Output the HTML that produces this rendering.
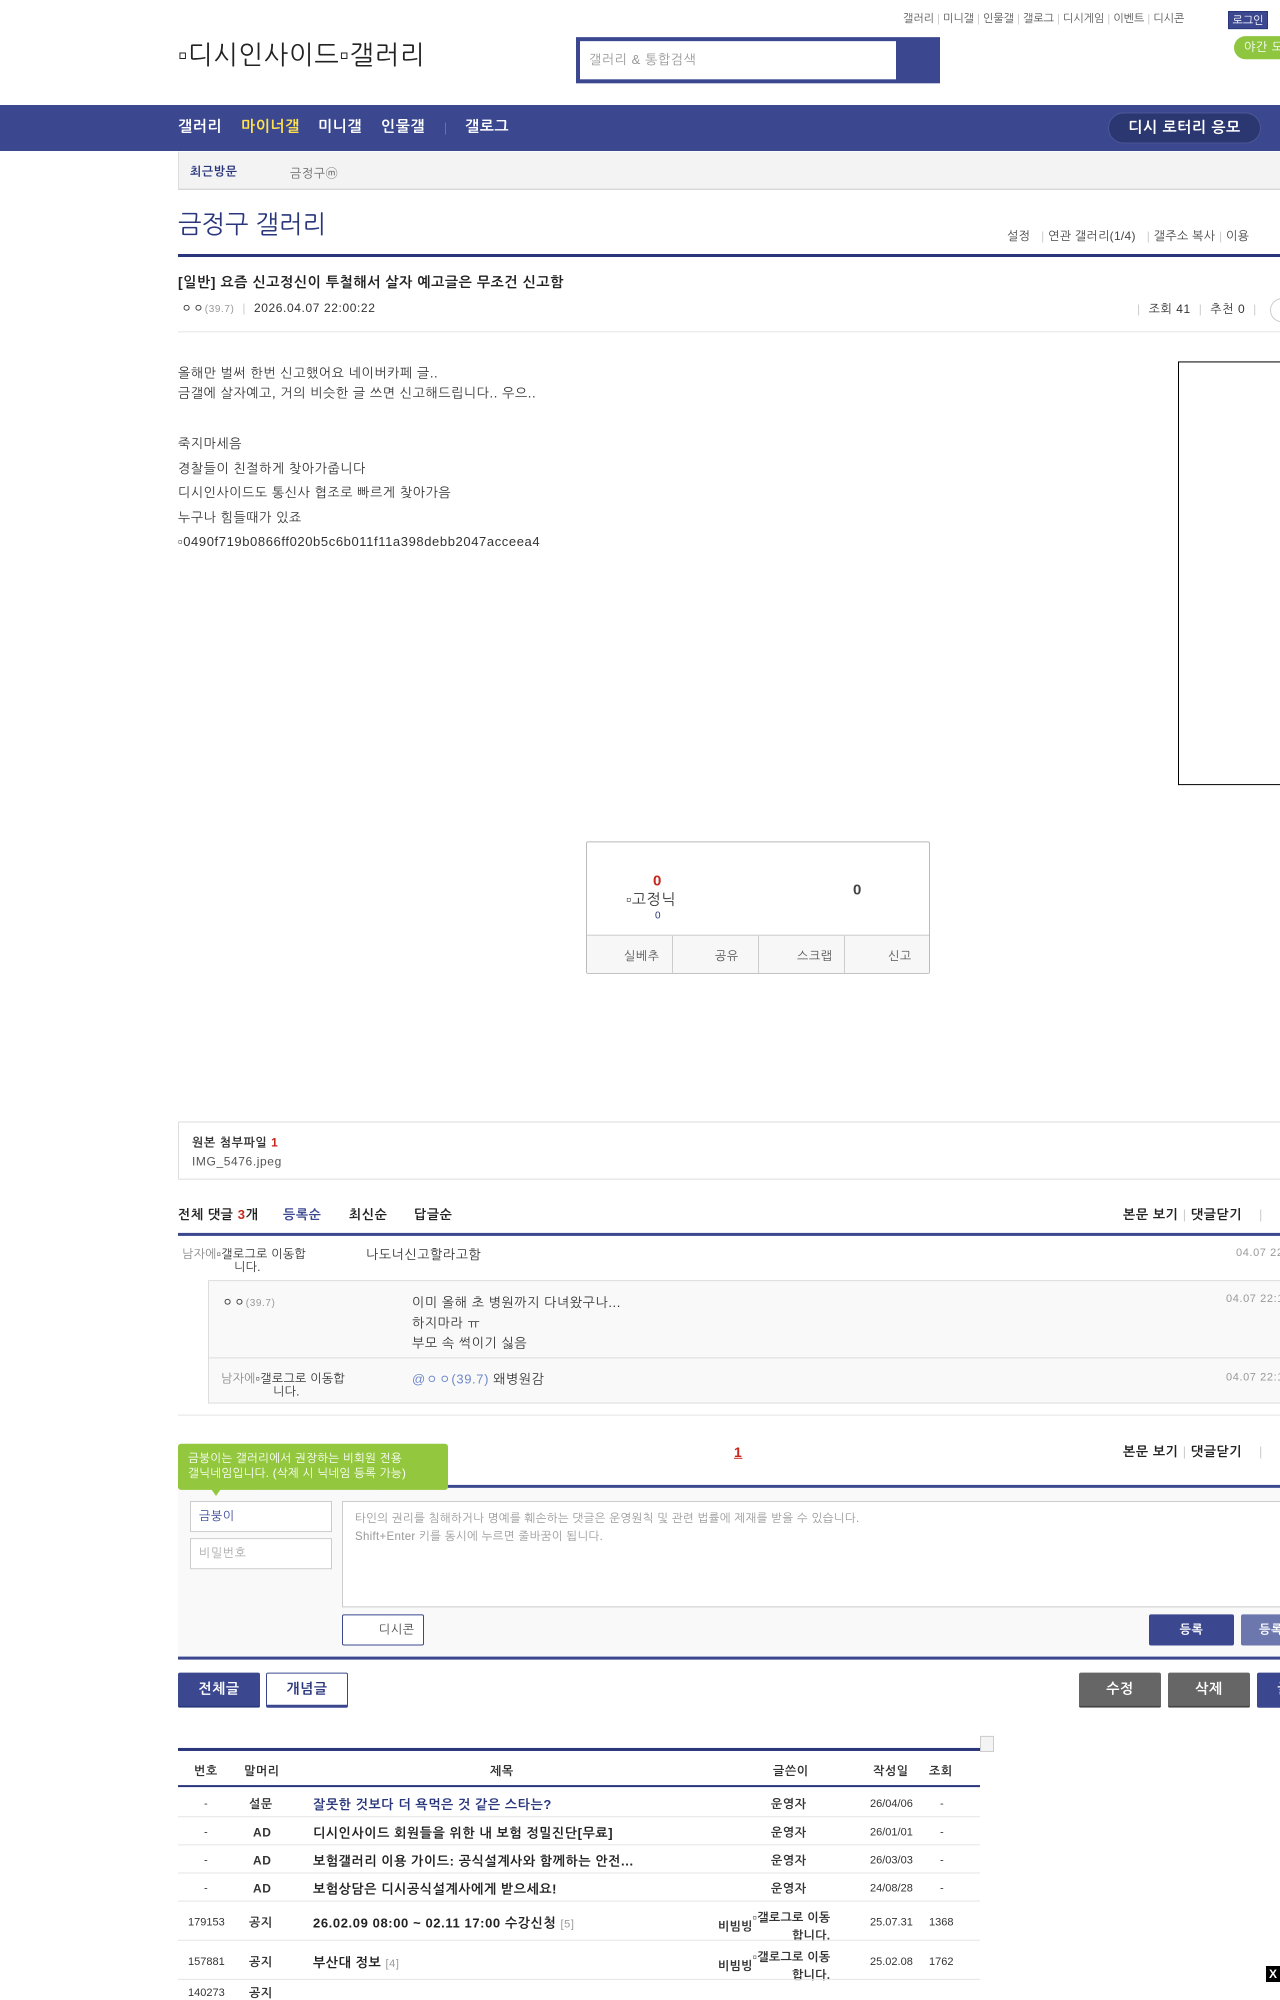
<!DOCTYPE html>
<html><head><meta charset="utf-8"><style>
*{margin:0;padding:0;box-sizing:border-box}
body{width:1280px;height:1982px;overflow:hidden;position:relative;background:#fff;font-family:"Liberation Sans","NanumGothic","Noto Sans CJK KR",sans-serif;color:#333;font-size:13px;letter-spacing:0.6px}
#w{position:absolute;left:0;top:0;width:1280px;height:1982px;transform:translateY(3px) scaleY(1.004);transform-origin:0 0}
.a{position:absolute;white-space:nowrap}
.nav{color:#fff;font-weight:bold;font-size:15px;top:119px}
.hl{position:absolute;height:1px;background:#e5e5e5}
.navy{background:#3b4890}
.btn{position:absolute;color:#fff;font-weight:bold;font-size:14px;text-align:center;border-radius:2px}
.tl{font-size:11px;color:#333}
</style></head><body>
<div class="a navy" style="top:105px;left:0;width:1280px;height:46px"></div>
<div id="w">
<div class="a" style="top:9px;left:903px;font-size:11px;color:#555;letter-spacing:0">갤러리 <span style="color:#ccc">|</span> 미니갤 <span style="color:#ccc">|</span> 인물갤 <span style="color:#ccc">|</span> 갤로그 <span style="color:#ccc">|</span> 디시게임 <span style="color:#ccc">|</span> 이벤트 <span style="color:#ccc">|</span> 디시콘</div>
<div class="a navy" style="top:8px;left:1228px;width:40px;height:18px;color:#fff;font-size:11px;text-align:center;line-height:18px;border:1px solid #29367c;letter-spacing:0">로그인</div>
<div class="a" style="top:33px;left:1234px;width:60px;height:23px;background:#8ec640;border-radius:12px;color:#fff;font-size:12px;line-height:23px;padding-left:10px">야간 모드</div>
<div class="a" style="top:36px;left:178px;font-size:26px;color:#222;letter-spacing:0.8px">▫디시인사이드▫갤러리</div>
<div class="a" style="top:34px;left:576px;width:364px;height:46px;background:#3b4890"></div>
<div class="a" style="top:38px;left:580px;width:316px;height:38px;background:#fff;color:#999;font-size:13px;line-height:38px;padding-left:9px">갤러리 &amp; 통합검색</div>
<div class="a nav" style="left:178px;top:115px">갤러리</div>
<div class="a nav" style="left:241px;top:115px;color:#ffe14c">마이너갤</div>
<div class="a nav" style="left:318px;top:115px">미니갤</div>
<div class="a nav" style="left:381px;top:115px">인물갤</div>
<div class="a" style="left:445px;top:119px;width:1px;height:12px;background:#6470b0"></div>
<div class="a nav" style="left:465px;top:115px">갤로그</div>
<div class="a" style="top:109px;left:1108px;width:153px;height:31px;background:#2b3770;border:1px solid #4a5696;border-radius:16px;color:#fff;font-weight:bold;font-size:15px;text-align:center;line-height:29px">디시 로터리 응모</div>
<div class="a" style="top:148px;left:178px;width:1110px;height:38px;background:#f3f3f3;border-left:1px solid #ddd;border-bottom:1px solid #ccc"></div>
<div class="a" style="top:161px;left:190px;font-size:12px;font-weight:bold;color:#29367c">최근방문</div>
<div class="a" style="top:161px;left:290px;font-size:12px;color:#666">금정구ⓜ</div>
<div class="a" style="top:205px;left:178px;font-size:25px;color:#29367c;letter-spacing:0">금정구 갤러리</div>
<div class="a" style="top:225px;left:1007px;font-size:12px;color:#444;letter-spacing:0.3px">설정 &nbsp; <span style="color:#ccc">|</span> 연관 갤러리(1/4) &nbsp; <span style="color:#ccc">|</span> 갤주소 복사 <span style="color:#ccc">|</span> 이용</div>
<div class="a" style="top:250px;left:178px;width:1110px;height:3px;background:#29367c"></div>
<div class="a" style="top:270px;left:178px;font-size:14px;font-weight:bold;color:#222">[일반] 요즘 신고정신이 투철해서 살자 예고글은 무조건 신고함</div>
<div class="a" style="top:297px;left:181px;font-size:12px"><span style="color:#333">ㅇㅇ</span><span style="font-size:10px;color:#999">(39.7)</span> <span style="color:#ccc">&nbsp;|&nbsp;</span> 2026.04.07 22:00:22</div>
<div class="a" style="top:298px;left:1137px;font-size:12px"><span style="color:#ccc">|</span>&nbsp; 조회 41 &nbsp;<span style="color:#ccc">|</span>&nbsp; 추천 0 &nbsp;<span style="color:#ccc">|</span></div>
<div class="a" style="top:294px;left:1270px;width:24px;height:24px;border:1px solid #ccc;border-radius:12px"></div>
<div class="hl" style="top:327px;left:178px;width:1110px"></div>
<div class="a" style="top:359px;left:178px;font-size:13px;line-height:20px">올해만 벌써 한번 신고했어요 네이버카페 글..<br>금갤에 살자예고, 거의 비슷한 글 쓰면 신고해드립니다.. 우으..</div>
<div class="a" style="top:427px;left:178px;font-size:13px;line-height:24.5px">죽지마세음<br>경찰들이 친절하게 찾아가줍니다<br>디시인사이드도 통신사 협조로 빠르게 찾아가음<br>누구나 힘들때가 있죠<br>▫0490f719b0866ff020b5c6b011f11a398debb2047acceea4</div>
<div class="a" style="top:357px;left:1178px;width:120px;height:422px;border:1px solid #000"></div>
<div class="a" style="top:835px;left:586px;width:344px;height:132px;border:1px solid #bbb;border-radius:2px"></div>
<div class="a" style="top:866px;left:653px;font-size:15px;font-weight:bold;color:#c8261c">0</div>
<div class="a" style="top:884px;left:626px;font-size:15px;color:#333">▫고정닉</div>
<div class="a" style="top:904px;left:655px;font-size:10px;color:#29367c">0</div>
<div class="a" style="top:875px;left:853px;font-size:15px;font-weight:bold;color:#444">0</div>
<div class="a" style="top:928px;left:587px;width:342px;height:38px;background:#f7f7f7;border-top:1px solid #ccc"></div>
<div class="a" style="top:929px;left:672px;width:1px;height:37px;background:#ccc"></div>
<div class="a" style="top:929px;left:758px;width:1px;height:37px;background:#ccc"></div>
<div class="a" style="top:929px;left:844px;width:1px;height:37px;background:#ccc"></div>
<div class="a" style="top:942px;left:624px;color:#555;font-size:12px">실베추</div>
<div class="a" style="top:942px;left:715px;color:#555;font-size:12px">공유</div>
<div class="a" style="top:942px;left:797px;color:#555;font-size:12px">스크랩</div>
<div class="a" style="top:942px;left:888px;color:#555;font-size:12px">신고</div>
<div class="a" style="top:1114px;left:178px;width:1110px;height:58px;border:1px solid #ddd"></div>
<div class="a" style="top:1128px;left:192px;font-size:12px;font-weight:bold;color:#333">원본 첨부파일 <span style="color:#c8261c">1</span></div>
<div class="a" style="top:1147px;left:192px;font-size:12px;color:#555">IMG_5476.jpeg</div>
<div class="a" style="top:1199px;left:178px;font-size:13px;font-weight:bold;color:#222">전체 댓글 <span style="color:#c8261c">3</span>개</div>
<div class="a" style="top:1199px;left:283px;font-size:13px;font-weight:bold;color:#3b4890">등록순</div>
<div class="a" style="top:1199px;left:349px;font-size:13px;font-weight:bold;color:#222">최신순</div>
<div class="a" style="top:1199px;left:414px;font-size:13px;font-weight:bold;color:#222">답글순</div>
<div class="a" style="top:1199px;left:1123px;font-size:13px;font-weight:bold;color:#222">본문 보기 <span style="color:#ccc;font-weight:normal">|</span> 댓글닫기 &nbsp; &nbsp;<span style="color:#ccc;font-weight:normal">|</span></div>
<div class="a" style="top:1225px;left:178px;width:1110px;height:3px;background:#3b4890"></div>
<div class="a" style="top:1240px;left:182px;font-size:12px;color:#888;line-height:13px;letter-spacing:0.3px">남자에<span style="color:#333">▫갤로그로 이동합</span><br><span style="padding-left:52px;color:#333">니다.</span></div>
<div class="a" style="top:1239px;left:366px;font-size:13px;color:#333">나도너신고할라고함</div>
<div class="a" style="top:1239px;left:1236px;font-size:11px;color:#999">04.07 22:</div>
<div class="a" style="top:1272px;left:208px;width:1090px;height:123px;background:#f9f9f9;border:1px solid #ddd"></div>
<div class="a" style="top:1349px;left:209px;width:1080px;height:1px;background:#ddd"></div>
<div class="a" style="top:1287px;left:222px;font-size:12px">ㅇㅇ<span style="font-size:10px;color:#999">(39.7)</span></div>
<div class="a" style="top:1285px;left:412px;font-size:13px;line-height:20px">이미 올해 초 병원까지 다녀왔구나...<br>하지마라 ㅠ<br>부모 속 썩이기 싫음</div>
<div class="a" style="top:1285px;left:1226px;font-size:11px;color:#999">04.07 22:1</div>
<div class="a" style="top:1364px;left:221px;font-size:12px;color:#888;line-height:13px;letter-spacing:0.3px">남자에<span style="color:#333">▫갤로그로 이동합</span><br><span style="padding-left:52px;color:#333">니다.</span></div>
<div class="a" style="top:1363px;left:412px;font-size:13px"><span style="color:#6f88c8">@ㅇㅇ(39.7)</span> 왜병원감</div>
<div class="a" style="top:1363px;left:1226px;font-size:11px;color:#999">04.07 22:1</div>
<div class="hl" style="top:1406px;left:178px;width:1110px"></div>
<div class="a" style="top:1435px;left:734px;font-size:14px;font-weight:bold;color:#c8261c;text-decoration:underline">1</div>
<div class="a" style="top:1435px;left:1123px;font-size:13px;font-weight:bold;color:#222">본문 보기 <span style="color:#ccc;font-weight:normal">|</span> 댓글닫기 &nbsp; &nbsp;<span style="color:#ccc;font-weight:normal">|</span></div>
<div class="a" style="top:1476px;left:178px;width:1110px;height:3px;background:#3b4890"></div>
<div class="a" style="top:1479px;left:178px;width:1110px;height:168px;background:#f9f9f9"></div>
<div class="a" style="top:1435px;left:178px;width:270px;height:46px;background:#93c83e;border-radius:3px;color:#fff;font-size:11.5px;line-height:15px;padding:8px 0 0 10px;letter-spacing:0.3px">금붕이는 갤러리에서 권장하는 비회원 전용<br>갤닉네임입니다. (삭제 시 닉네임 등록 가능)</div>
<div class="a" style="top:1480px;left:211px;width:0;height:0;border-left:5px solid transparent;border-right:5px solid transparent;border-top:7px solid #93c83e"></div>
<div class="a" style="top:1492px;left:190px;width:142px;height:31px;background:#fff;border:1px solid #ccc;font-size:12px;color:#3b4890;line-height:29px;padding-left:8px">금붕이</div>
<div class="a" style="top:1529px;left:190px;width:142px;height:31px;background:#fff;border:1px solid #ccc;font-size:12px;color:#aaa;line-height:29px;padding-left:8px">비밀번호</div>
<div class="a" style="top:1492px;left:342px;width:950px;height:106px;background:#fff;border:1px solid #ccc;font-size:11.5px;color:#999;line-height:18px;padding:8px 12px;letter-spacing:0.3px">타인의 권리를 침해하거나 명예를 훼손하는 댓글은 운영원칙 및 관련 법률에 제재를 받을 수 있습니다.<br>Shift+Enter 키를 동시에 누르면 줄바꿈이 됩니다.</div>
<div class="a" style="top:1605px;left:342px;width:82px;height:31px;background:#fff;border:1px solid #3b4890;border-radius:2px;font-size:12px;color:#444;line-height:29px;padding-left:36px">디시콘</div>
<div class="btn navy" style="top:1605px;left:1149px;width:85px;height:31px;line-height:31px;font-size:12px">등록</div>
<div class="btn" style="top:1605px;left:1241px;width:60px;height:31px;line-height:31px;font-size:12px;background:#6c77ad">등록</div>
<div class="a" style="top:1647px;left:178px;width:1110px;height:3px;background:#3b4890"></div>
<div class="btn navy" style="top:1663px;left:178px;width:82px;height:35px;line-height:33px;border-bottom:2px solid #29367c">전체글</div>
<div class="btn" style="top:1663px;left:266px;width:82px;height:35px;line-height:31px;background:#fff;color:#29367c;border:1px solid #3b4890;border-bottom:3px solid #3b4890">개념글</div>
<div class="btn" style="top:1663px;left:1079px;width:82px;height:35px;line-height:33px;background:#666;border-bottom:2px solid #444">수정</div>
<div class="btn" style="top:1663px;left:1168px;width:82px;height:35px;line-height:33px;background:#666;border-bottom:2px solid #444">삭제</div>
<div class="btn navy" style="top:1663px;left:1257px;width:82px;height:35px;line-height:33px">글쓰기</div>
<div class="a" style="top:1726px;left:980px;width:14px;height:16px;border:1px solid #ccc;background:#f4f4f4"></div>
<div class="a" style="top:1738px;left:178px;width:802px;height:3px;background:#29367c"></div>
<div class="a" style="top:1754px;left:194px;font-size:12px;font-weight:bold;color:#333">번호</div>
<div class="a" style="top:1754px;left:244px;font-size:12px;font-weight:bold;color:#333">말머리</div>
<div class="a" style="top:1754px;left:490px;font-size:12px;font-weight:bold;color:#333">제목</div>
<div class="a" style="top:1754px;left:773px;font-size:12px;font-weight:bold;color:#333">글쓴이</div>
<div class="a" style="top:1754px;left:873px;font-size:12px;font-weight:bold;color:#333">작성일</div>
<div class="a" style="top:1754px;left:929px;font-size:12px;font-weight:bold;color:#333">조회</div>
<div class="a" style="top:1775px;left:178px;width:802px;height:2px;background:#29367c"></div>

<div class="a" style="top:1788px;left:204px;font-size:11px">-</div>
<div class="a" style="top:1787px;left:249px;font-size:12px;font-weight:bold">설문</div>
<div class="a" style="top:1787px;left:313px;font-size:13px;font-weight:bold;color:#29367c">잘못한 것보다 더 욕먹은 것 같은 스타는?</div>
<div class="a" style="top:1787px;left:771px;font-size:12px;font-weight:bold">운영자</div>
<div class="a" style="top:1788px;left:870px;font-size:11px;letter-spacing:0">26/04/06</div>
<div class="a" style="top:1788px;left:940px;font-size:11px">-</div>
<div class="hl" style="top:1806px;left:178px;width:802px"></div>

<div class="a" style="top:1816px;left:204px;font-size:11px">-</div>
<div class="a" style="top:1815px;left:253px;font-size:12px;font-weight:bold">AD</div>
<div class="a" style="top:1815px;left:313px;font-size:13px;font-weight:bold;color:#222">디시인사이드 회원들을 위한 내 보험 정밀진단[무료]</div>
<div class="a" style="top:1815px;left:771px;font-size:12px;font-weight:bold">운영자</div>
<div class="a" style="top:1816px;left:870px;font-size:11px;letter-spacing:0">26/01/01</div>
<div class="a" style="top:1816px;left:940px;font-size:11px">-</div>
<div class="hl" style="top:1834px;left:178px;width:802px"></div>

<div class="a" style="top:1844px;left:204px;font-size:11px">-</div>
<div class="a" style="top:1843px;left:253px;font-size:12px;font-weight:bold">AD</div>
<div class="a" style="top:1843px;left:313px;font-size:13px;font-weight:bold;color:#222">보험갤러리 이용 가이드: 공식설계사와 함께하는 안전...</div>
<div class="a" style="top:1843px;left:771px;font-size:12px;font-weight:bold">운영자</div>
<div class="a" style="top:1844px;left:870px;font-size:11px;letter-spacing:0">26/03/03</div>
<div class="a" style="top:1844px;left:940px;font-size:11px">-</div>
<div class="hl" style="top:1862px;left:178px;width:802px"></div>

<div class="a" style="top:1872px;left:204px;font-size:11px">-</div>
<div class="a" style="top:1871px;left:253px;font-size:12px;font-weight:bold">AD</div>
<div class="a" style="top:1871px;left:313px;font-size:13px;font-weight:bold;color:#222">보험상담은 디시공식설계사에게 받으세요!</div>
<div class="a" style="top:1871px;left:771px;font-size:12px;font-weight:bold">운영자</div>
<div class="a" style="top:1872px;left:870px;font-size:11px;letter-spacing:0">24/08/28</div>
<div class="a" style="top:1872px;left:940px;font-size:11px">-</div>
<div class="hl" style="top:1890px;left:178px;width:802px"></div>

<div class="a" style="top:1906px;left:188px;font-size:11px;letter-spacing:0">179153</div>
<div class="a" style="top:1905px;left:249px;font-size:12px;font-weight:bold">공지</div>
<div class="a" style="top:1905px;left:313px;font-size:13px;font-weight:bold;color:#222">26.02.09 08:00 ~ 02.11 17:00 수강신청 <span style="font-weight:normal;color:#999;font-size:11px">[5]</span></div>
<div class="a" style="top:1898px;left:718px;font-size:12px;font-weight:bold;line-height:18px;letter-spacing:0.3px"><span style="position:relative;top:9px">비빔빙</span>▫갤로그로 이동<br><span style="padding-left:74px">합니다.</span></div>
<div class="a" style="top:1906px;left:870px;font-size:11px;letter-spacing:0">25.07.31</div>
<div class="a" style="top:1906px;left:929px;font-size:11px;letter-spacing:0">1368</div>
<div class="hl" style="top:1929px;left:178px;width:802px"></div>

<div class="a" style="top:1945px;left:188px;font-size:11px;letter-spacing:0">157881</div>
<div class="a" style="top:1944px;left:249px;font-size:12px;font-weight:bold">공지</div>
<div class="a" style="top:1944px;left:313px;font-size:13px;font-weight:bold;color:#222">부산대 정보 <span style="font-weight:normal;color:#999;font-size:11px">[4]</span></div>
<div class="a" style="top:1937px;left:718px;font-size:12px;font-weight:bold;line-height:18px;letter-spacing:0.3px"><span style="position:relative;top:9px">비빔빙</span>▫갤로그로 이동<br><span style="padding-left:74px">합니다.</span></div>
<div class="a" style="top:1945px;left:870px;font-size:11px;letter-spacing:0">25.02.08</div>
<div class="a" style="top:1945px;left:929px;font-size:11px;letter-spacing:0">1762</div>
<div class="hl" style="top:1968px;left:178px;width:802px"></div>
<div class="a" style="top:1976px;left:188px;font-size:11px;letter-spacing:0">140273</div>
<div class="a" style="top:1975px;left:249px;font-size:12px;font-weight:bold">공지</div>
</div>
<div class="a" style="top:1966px;left:1266px;width:14px;height:16px;background:#000;color:#fff;font-size:12px;font-weight:bold;text-align:center;line-height:16px;letter-spacing:0">X</div>
</body></html>
